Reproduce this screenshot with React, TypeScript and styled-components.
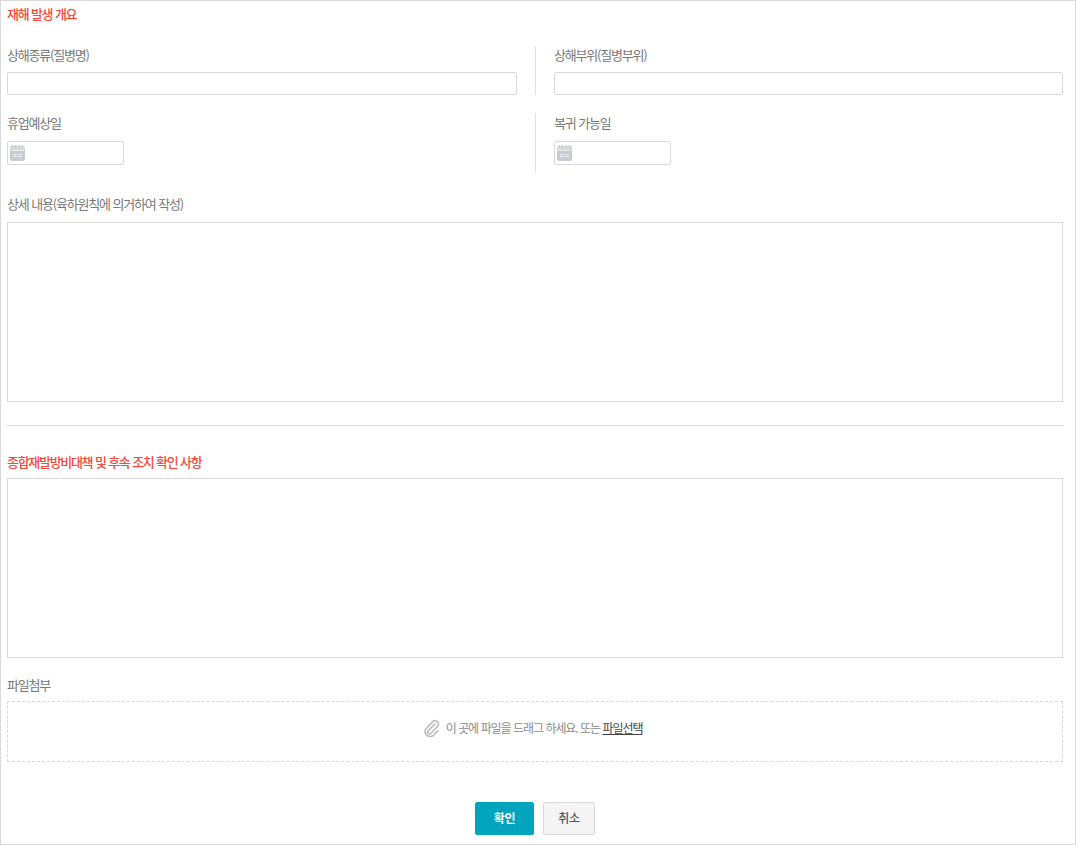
import React from 'react'
import styled, { createGlobalStyle } from 'styled-components'

const GlobalStyle = createGlobalStyle`
  html, body {
    margin: 0;
    padding: 0;
    background: #fff;
  }
  * {
    box-sizing: border-box;
  }
`

const Page = styled.div`
  width: 1076px;
  height: 845px;
  border: 1px solid #d9d9d9;
  padding: 0 12px 0 6px;
  font-family: 'Noto Sans CJK KR', 'Noto Sans', sans-serif;
  font-size: 13px;
  letter-spacing: -1.2px;
  word-spacing: 1px;
  color: #777;
`

const Title = styled.h3<{ $top: number; $bottom: number }>`
  margin: ${p => p.$top}px 0 ${p => p.$bottom}px;
  height: 16px;
  line-height: 16px;
  font-size: 13px;
  font-weight: 500;
  letter-spacing: -1.3px;
  color: #f4473a;
`

const Row = styled.div<{ $height: number; $bottom: number }>`
  display: grid;
  grid-template-columns: 510px 1fr;
  column-gap: 37px;
  height: ${p => p.$height}px;
  margin-bottom: ${p => p.$bottom}px;
`

const Field = styled.div<{ $divided?: boolean }>`
  position: relative;
  padding-top: 2px;

  ${p =>
    p.$divided &&
    `
    &::before {
      content: '';
      position: absolute;
      left: -19px;
      top: 0;
      bottom: 0;
      width: 1px;
      background: #e0e0e0;
    }
  `}
`

const Label = styled.label<{ $top?: number; $bottom: number }>`
  display: block;
  height: 16px;
  line-height: 16px;
  margin-top: ${p => p.$top ?? 0}px;
  margin-bottom: ${p => p.$bottom}px;
`

const TextInput = styled.div`
  width: 100%;
  height: 23px;
  border: 1px solid #d9d9d9;
  border-radius: 2px;
  background: #fff;
`

const DateInput = styled.div`
  display: flex;
  align-items: center;
  width: 117px;
  height: 24px;
  padding-left: 2px;
  border: 1px solid #d9d9d9;
  border-radius: 2px;
`

const TextArea = styled.div`
  width: 100%;
  height: 180px;
  border: 1px solid #d9d9d9;
  background: #fff;
`

const Divider = styled.hr`
  margin: 23px 0 28px;
  border: 0;
  border-top: 1px solid #d9d9d9;
`

const DropZone = styled.div`
  display: flex;
  align-items: center;
  justify-content: center;
  gap: 6px;
  height: 61px;
  padding: 0 4px 8px 0;
  border: 1px dashed #d9d9d9;
  font-size: 12px;
  letter-spacing: -1.1px;
  color: #8a8a8a;
`

const PickLink = styled.a`
  color: #444;
  text-decoration: underline;
`

const Buttons = styled.div`
  display: flex;
  justify-content: center;
  gap: 9px;
  margin-top: 40px;
`

const Button = styled.button<{ $primary?: boolean }>`
  height: 33px;
  width: ${p => (p.$primary ? 59 : 52)}px;
  padding: 0 0 2px;
  border: 1px solid ${p => (p.$primary ? '#00a5bd' : '#d9d9d9')};
  border-radius: 2px;
  background: ${p => (p.$primary ? '#00a5bd' : '#f4f4f4')};
  color: ${p => (p.$primary ? '#fff' : '#555')};
  font-family: inherit;
  font-size: 12px;
  font-weight: ${p => (p.$primary ? 700 : 500)};
  letter-spacing: -0.3px;
`

function CalendarIcon () {
  return (
    <svg width='15' height='16' viewBox='0 0 15 16'>
      <rect x='0' y='1' width='15' height='15' rx='2' fill='#c9cbd3' />
      <rect x='0' y='1' width='15' height='4' rx='1.5' fill='#d6d8de' />
      <rect x='2' y='0' width='1' height='2' fill='#c4c6ce' />
      <rect x='5' y='0' width='1' height='2' fill='#c4c6ce' />
      <rect x='9' y='0' width='1' height='2' fill='#c4c6ce' />
      <rect x='12' y='0' width='1' height='2' fill='#c4c6ce' />
      <rect x='1' y='5' width='13' height='1' fill='#eceded' />
      <rect x='3' y='9' width='4' height='1' fill='#eff0f3' />
      <rect x='8' y='9' width='4' height='1' fill='#eff0f3' />
      <rect x='3' y='11' width='4' height='1' fill='#eff0f3' />
      <rect x='8' y='11' width='4' height='1' fill='#eff0f3' />
    </svg>
  )
}

function ClipIcon () {
  return (
    <svg width='16' height='18' viewBox='0 0 16 18' fill='none' stroke='#bdbdbd' strokeWidth='1.6' strokeLinecap='round'>
      <path d='M11 5 4.2 11.6a1.9 1.9 0 0 0 2.7 2.7l6.6-6.9a3.4 3.4 0 0 0-4.8-4.8L2.2 9.5a5 5 0 0 0 7 7L14 11.6' />
    </svg>
  )
}

function App () {
  return (
    <Page>
      <GlobalStyle />
      <Title $top={5} $bottom={24}>재해 발생 개요</Title>
      <Row $height={49} $bottom={18}>
        <Field>
          <Label $top={-1} $bottom={9}>상해종류(질병명)</Label>
          <TextInput />
        </Field>
        <Field $divided>
          <Label $top={-1} $bottom={9}>상해부위(질병부위)</Label>
          <TextInput />
        </Field>
      </Row>
      <Row $height={60} $bottom={23}>
        <Field>
          <Label $bottom={10}>휴업예상일</Label>
          <DateInput><CalendarIcon /></DateInput>
        </Field>
        <Field $divided>
          <Label $bottom={10}>복귀 가능일</Label>
          <DateInput><CalendarIcon /></DateInput>
        </Field>
      </Row>
      <Label $bottom={10}>상세 내용(육하원칙에 의거하여 작성)</Label>
      <TextArea />
      <Divider />
      <Title $top={0} $bottom={8}>종합재발방비대책 및 후속 조치 확인 사항</Title>
      <TextArea />
      <Label $top={19} $bottom={8}>파일첨부</Label>
      <DropZone>
        <ClipIcon />
        <span>이 곳에 파일을 드래그 하세요. 또는 <PickLink>파일선택</PickLink></span>
      </DropZone>
      <Buttons>
        <Button $primary>확인</Button>
        <Button>취소</Button>
      </Buttons>
    </Page>
  )
}

export default App
